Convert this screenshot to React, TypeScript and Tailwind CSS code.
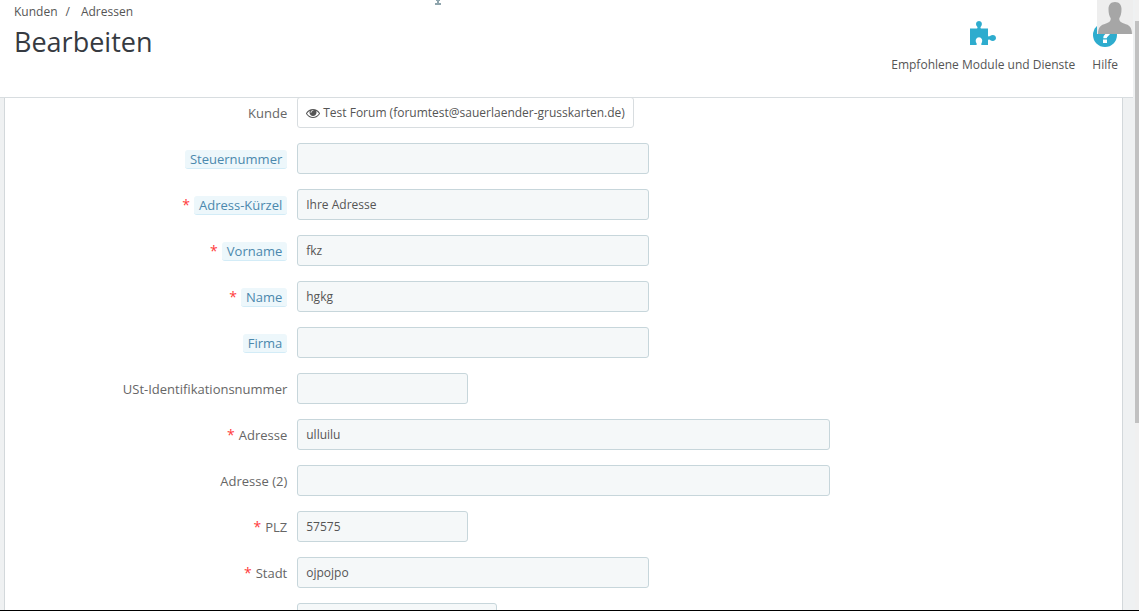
import { useState } from 'react';
import clsx from 'clsx';

type Field = {
  id: string;
  label: string;
  value?: string;
  required?: boolean;
  hint?: boolean;
  span: string;
};

const FIELDS: Field[] = [
  { id: 'dni', label: 'Steuernummer', hint: true, span: 'col-span-4' },
  { id: 'alias', label: 'Adress-Kürzel', value: 'Ihre Adresse', required: true, hint: true, span: 'col-span-4' },
  { id: 'firstname', label: 'Vorname', value: 'fkz', required: true, hint: true, span: 'col-span-4' },
  { id: 'lastname', label: 'Name', value: 'hgkg', required: true, hint: true, span: 'col-span-4' },
  { id: 'company', label: 'Firma', hint: true, span: 'col-span-4' },
  { id: 'vat_number', label: 'USt-Identifikationsnummer', span: 'col-span-2' },
  { id: 'address1', label: 'Adresse', value: 'ulluilu', required: true, span: 'col-span-6' },
  { id: 'address2', label: 'Adresse (2)', span: 'col-span-6' },
  { id: 'postcode', label: 'PLZ', value: '57575', required: true, span: 'col-span-2' },
  { id: 'city', label: 'Stadt', value: 'ojpojpo', required: true, span: 'col-span-4' },
];

/* --- Icons --- */

function PuzzleIcon() {
  return (
    <svg width="28" height="26" viewBox="0 0 28 26" fill="#2eacce" aria-hidden="true">
      <path d="M1 8.500H7.800C8.800 8.500 8.700 7.400 7.900 6.300C6.200 4 7.400 1 10 1S13.800 4 12.100 6.300C11.300 7.400 11.200 8.500 12.200 8.500H19V15.500C19 16.700 20 16.800 21 16.100C23.600 14.200 27 15.200 27 18S23.600 21.800 21 19.900C20 19.200 19 19.300 19 20.500V25H13C12 25 12 24.300 12.500 23.300C14.200 20.400 12.700 17.300 10 17.300S5.800 20.400 7.500 23.300C8 24.300 8 25 7 25H1Z" />
    </svg>
  );
}

function HelpIcon() {
  return (
    <svg width="24" height="24" viewBox="0 0 24 24" aria-hidden="true">
      <circle cx="12" cy="12" r="12" fill="#2eacce" />
      <path d="M8 9C8 5.500 15.500 5 15.500 9.500C15.500 12 12 12 12 15.200" fill="none" stroke="#fff" strokeWidth="3.500" />
      <path d="M10 16.500H14V20H10Z" fill="#fff" />
    </svg>
  );
}

function EyeIcon() {
  return (
    <svg width="14" height="14" viewBox="0 0 1792 1792" fill="currentColor" aria-hidden="true">
      <path d="M1664 960q-152-236-381-353 61 104 61 225 0 185-131.500 316.500t-316.500 131.500-316.500-131.500-131.500-316.500q0-121 61-225-229 117-381 353 133 205 333.500 326.500t434.500 121.500 434.500-121.500 333.500-326.500zM944 576q0-20-14-34t-34-14q-125 0-214.500 89.500t-89.500 214.500q0 20 14 34t34 14 34-14 14-34q0-86 61-147t147-61q20 0 34-14t14-34zM1792 960q0 34-20 69-140 230-376.500 368.500t-499.500 138.500-499.500-139-376.500-368q-20-35-20-69t20-69q140-229 376.500-368t499.500-139 499.500 139 376.500 368q20 35 20 69z" />
    </svg>
  );
}

function Avatar() {
  return (
    <svg width="36" height="34" viewBox="0 0 36 34" className="absolute top-0 right-0" aria-hidden="true">
      <rect width="36" height="34" fill="#eee" />
      <path
        d="M18 2C22.300 2 24.500 4.800 24.500 9C24.500 13.500 23.700 16 22.300 18.300C22.100 21.200 23.500 22.300 27 23.500C32.500 25.200 34.800 27 35 34H1C1.200 27 3.500 25.200 9 23.500C12.500 22.300 13.900 21.200 13.700 18.300C12.300 16 11.500 13.500 11.500 9C11.500 4.800 13.700 2 18 2Z"
        fill="#a6a6a6"
      />
    </svg>
  );
}

/* --- Form rows --- */

function FieldRow({ field }: { field: Field }) {
  const [value, setValue] = useState(field.value ?? '');

  return (
    <div className="grid grid-cols-12">
      <label
        htmlFor={field.id}
        className="col-span-3 flex items-center justify-end gap-1 px-[5px] pt-px text-[13px] leading-[18px] text-[#666]"
      >
        {field.required && <span className="text-sm leading-[18px] text-[#ff3b3b]">*</span>}
        <span className={clsx(field.hint && 'rounded-[3px] border-b border-[#d3ecf7] bg-[#edf7fb] px-[5px] text-[#4b88ad]')}>
          {field.label}
        </span>
      </label>
      <div className={clsx('px-[5px]', field.span)}>
        <input
          id={field.id}
          type="text"
          value={value}
          onChange={(e) => setValue(e.target.value)}
          className="block h-[31px] w-full rounded-[3px] border border-[#c7d6db] bg-[#f5f8f9] px-2 text-xs text-[#555]"
        />
      </div>
    </div>
  );
}

function App() {
  return (
    <div className="relative flex h-screen flex-col overflow-hidden border-b border-black bg-[#eff1f2] font-['Open_Sans',sans-serif] text-xs text-[#555]">
      <header className="relative z-10 mr-1.5 flex h-[98px] shrink-0 justify-between border-b border-[#d8dde0] bg-white pr-[15px] pl-3.5">
        <div className="pt-1">
          <nav aria-label="Breadcrumb" className="flex leading-4">
            <a href="#kunden">Kunden</a>
            <span className="px-2">/</span>
            <a href="#adressen" className="pl-[3px]">Adressen</a>
          </nav>
          <h1 className="pt-1 text-[27px] leading-9 text-[#363a41]">Bearbeiten</h1>
        </div>

        <div className="flex items-start gap-[17px] pt-5">
          <a href="#module" className="flex flex-col items-center gap-2.5">
            <span className="flex h-[27px] items-start"><PuzzleIcon /></span>
            <span className="leading-4">Empfohlene Module und Dienste</span>
          </a>
          <a href="#hilfe" className="flex flex-col items-center gap-2.5">
            <span className="flex h-[27px] items-end"><HelpIcon /></span>
            <span className="leading-4">Hilfe</span>
          </a>
        </div>
        <Avatar />

        {/* lower end of the loading mark at the top edge */}
        <svg width="6" height="5" viewBox="0 0 6 5" className="absolute top-0 left-[435px]" aria-hidden="true">
          <path d="M1 0H5V1H4V3H6V5H0V3H2V1H1Z" fill="#8fa5ad" />
        </svg>
      </header>

      <main className="-mt-px mr-4 ml-1 min-h-0 flex-1 overflow-hidden border-x border-[#d3d8db] bg-white px-4">
        <form className="flex flex-col gap-[15px]" onSubmit={(e) => e.preventDefault()}>
          <div className="grid grid-cols-12">
            <span className="col-span-3 self-center px-[5px] pt-px text-right text-[13px] leading-[18px] text-[#666]">Kunde</span>
            <div className="col-span-9 px-[5px]">
              <button type="button" className="flex h-[31px] items-center gap-[3px] rounded-[3px] border border-[#d8dde0] bg-white px-2">
                <EyeIcon />
                <span>Test Forum (forumtest@sauerlaender-grusskarten.de)</span>
              </button>
            </div>
          </div>

          {FIELDS.map((field) => (
            <FieldRow key={field.id} field={field} />
          ))}

          <div className="grid grid-cols-12">
            <span className="col-span-3" />
            <div className="col-span-9 px-[5px]">
              <select
                aria-label="Land"
                className="block h-[31px] w-[200px] appearance-none rounded-[3px] border border-[#c7d6db] bg-[#f5f8f9] px-2 text-xs"
              />
            </div>
          </div>
        </form>
      </main>

      {/* Scrollbar */}
      <div className="absolute inset-y-0 right-0 w-1 bg-[#f0f0f0] pt-[21px]">
        <div className="h-[402px] bg-[#c1c1c1]" />
      </div>
    </div>
  );
}

export default App;
